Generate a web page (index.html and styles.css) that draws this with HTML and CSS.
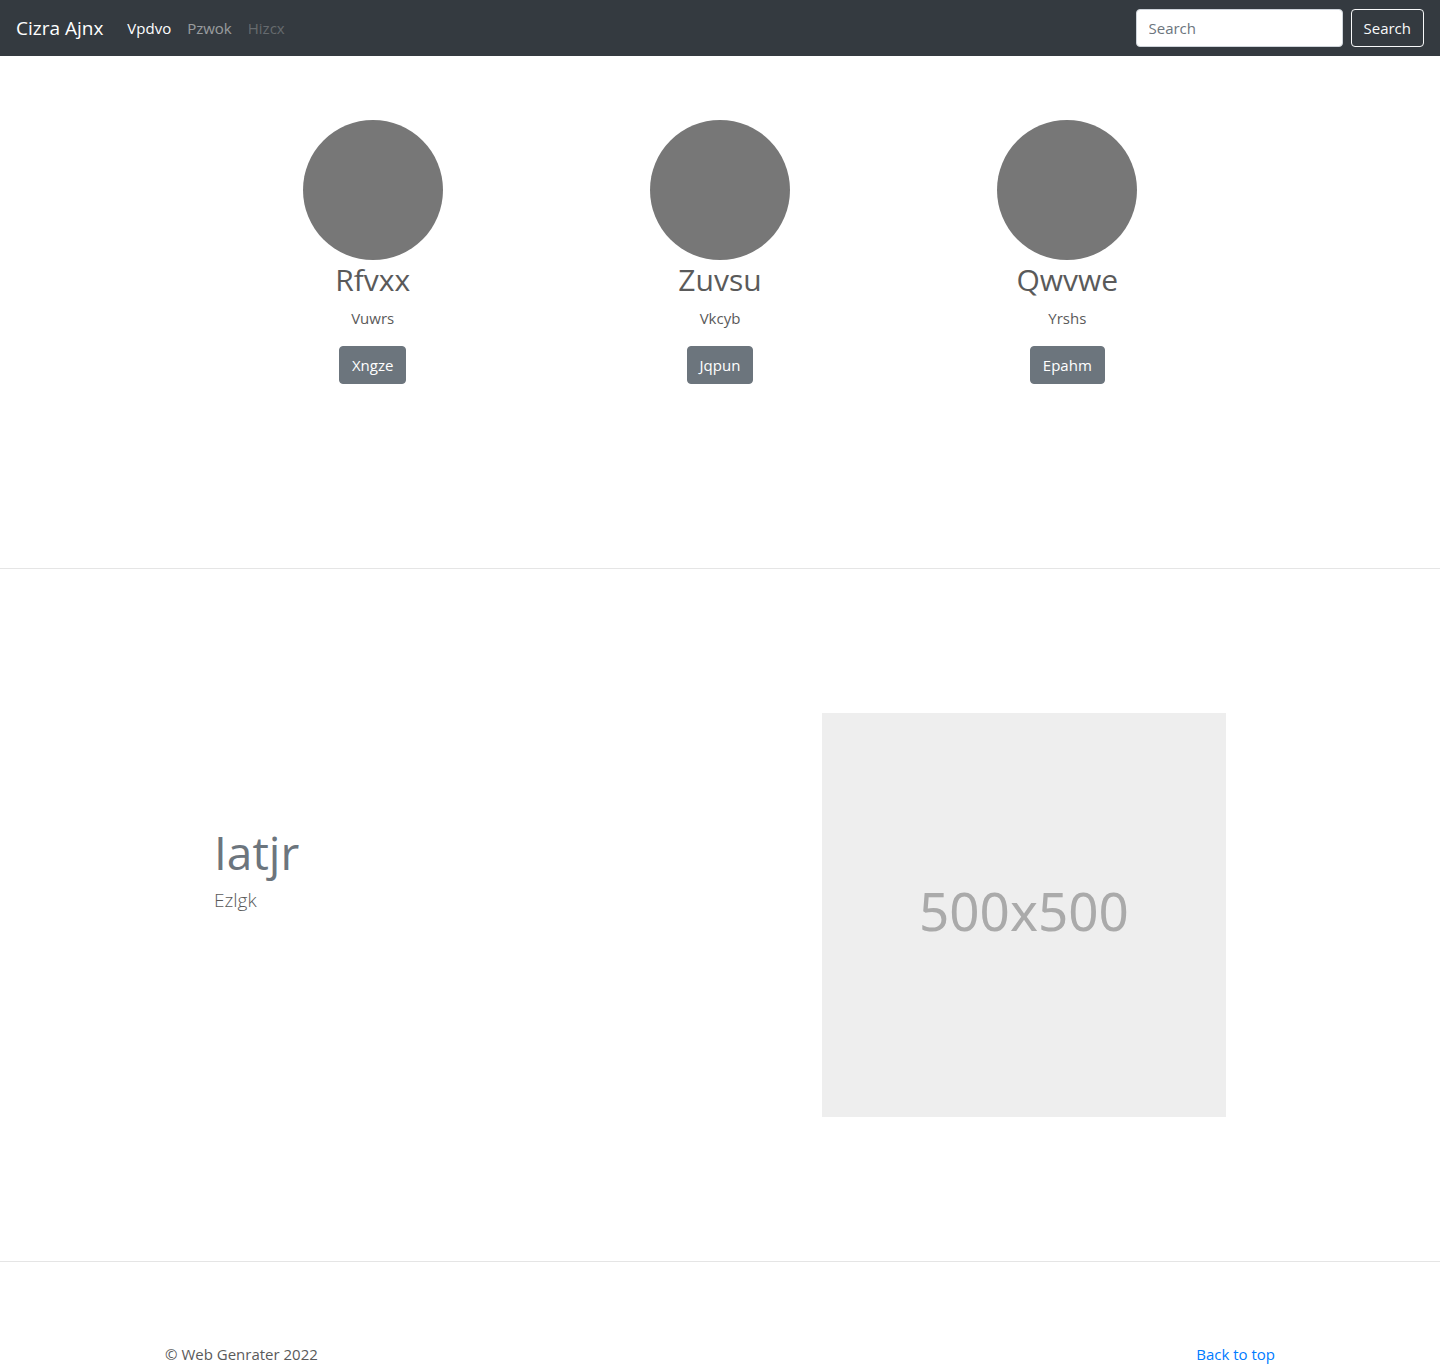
FILE: index.html
```html
<!DOCTYPE html>
<html lang="en">
<head>
<meta charset="utf-8">
<meta name="viewport" content="width=device-width, initial-scale=1">
<title>Cizra Ajnx</title>
<link rel="stylesheet" href="styles.css">
</head>
<body>
<header class="navbar">
  <a class="brand" href="#">Cizra Ajnx</a>
  <nav class="nav">
    <a class="nav-link active" href="#">Vpdvo</a>
    <a class="nav-link" href="#">Pzwok</a>
    <a class="nav-link disabled" href="#" aria-disabled="true">Hizcx</a>
  </nav>
  <form class="search">
    <input class="search-input" type="search" placeholder="Search" aria-label="Search">
    <button class="btn btn-outline" type="submit">Search</button>
  </form>
</header>
<main>
  <section class="container columns">
    <div class="column">
      <svg class="avatar" viewBox="0 0 140 140" aria-hidden="true"><circle cx="70" cy="70" r="70"/></svg>
      <h2 class="column-title">Rfvxx</h2>
      <p class="column-text">Vuwrs</p>
      <button class="btn btn-secondary" type="button">Xngze</button>
    </div>
    <div class="column">
      <svg class="avatar" viewBox="0 0 140 140" aria-hidden="true"><circle cx="70" cy="70" r="70"/></svg>
      <h2 class="column-title">Zuvsu</h2>
      <p class="column-text">Vkcyb</p>
      <button class="btn btn-secondary" type="button">Jqpun</button>
    </div>
    <div class="column">
      <svg class="avatar" viewBox="0 0 140 140" aria-hidden="true"><circle cx="70" cy="70" r="70"/></svg>
      <h2 class="column-title">Qwvwe</h2>
      <p class="column-text">Yrshs</p>
      <button class="btn btn-secondary" type="button">Epahm</button>
    </div>
  </section>
  <hr class="divider">
  <section class="container feature">
    <div class="feature-body">
      <h2 class="feature-title">Iatjr</h2>
      <p class="lead">Ezlgk</p>
    </div>
    <div class="feature-media">
      <div class="placeholder">500x500</div>
    </div>
  </section>
  <hr class="divider">
</main>
<footer class="footer">
  <p class="copyright">© Web Genrater 2022</p>
  <a class="top-link" href="#">Back to top</a>
</footer>
</body>
</html>
```
FILE: styles.css
```css
*, *::before, *::after { box-sizing: border-box; }

body {
  margin: 0;
  background: #fff;
  color: #5a5a5a;
  font-family: "Segoe UI", "Open Sans", "Noto Sans", sans-serif;
  font-size: 15px;
  line-height: 24px;
}

h2, p { margin: 0; font-weight: 400; }
a { text-decoration: none; }

.navbar {
  display: flex;
  align-items: center;
  height: 56px;
  padding: 0 16px;
  background: #343a40;
}
.brand { margin-right: 16px; color: #fff; font-size: 19px; line-height: 30px; }
.nav { display: flex; flex: 1; }
.nav-link { padding: 8px; color: rgba(255, 255, 255, .5); }
.nav-link.active { color: #fff; }
.nav-link.disabled { color: rgba(255, 255, 255, .25); }

.search { display: flex; gap: 8px; }
.search-input {
  width: 207px;
  height: 38px;
  padding: 6px 12px;
  border: 1px solid #ced4da;
  border-radius: 4px;
  background: #fff;
  color: #495057;
  font: inherit;
}
.search-input::placeholder { color: #6c757d; opacity: 1; }

.btn {
  height: 38px;
  padding: 0 12px;
  border: 1px solid transparent;
  border-radius: 4px;
  color: #fff;
  font: inherit;
  cursor: pointer;
}
.btn-outline { border-color: #f8f9fa; background: transparent; color: #f8f9fa; }
.btn-secondary { border-color: #6c757d; background: #6c757d; }

.container { max-width: 1042px; margin: 0 auto; }

.columns {
  display: grid;
  grid-template-columns: repeat(3, 1fr);
  padding: 64px 0 184px;
}
.column {
  display: flex;
  flex-direction: column;
  align-items: center;
  padding: 0 15px;
}
.avatar { width: 140px; height: 140px; fill: #777; }
.column-title { margin-bottom: 6px; font-size: 30px; line-height: 40px; }
.column-text { margin-bottom: 16px; }

.divider { margin: 0; border: 0; border-top: 1px solid rgba(0, 0, 0, .1); }

.feature {
  display: grid;
  grid-template-columns: 7fr 5fr;
  padding: 144px 0;
}
.feature-body { padding: 112px 15px 0; }
.feature-title { margin-bottom: 6px; color: #6c757d; font-size: 46px; line-height: 54px; }
.lead { font-size: 19px; line-height: 30px; font-weight: 300; }
.feature-media { padding: 0 15px; }
.placeholder {
  display: flex;
  align-items: center;
  justify-content: center;
  aspect-ratio: 1;
  padding-bottom: 8px;
  background: #eee;
  color: #aaa;
  font-family: "Noto Sans", "Open Sans", sans-serif;
  font-size: 53px;
  line-height: 64px;
}

.footer {
  display: flex;
  justify-content: space-between;
  max-width: 1140px;
  margin: 0 auto;
  padding: 80px 15px 0;
}
.top-link { color: #007bff; }
```
